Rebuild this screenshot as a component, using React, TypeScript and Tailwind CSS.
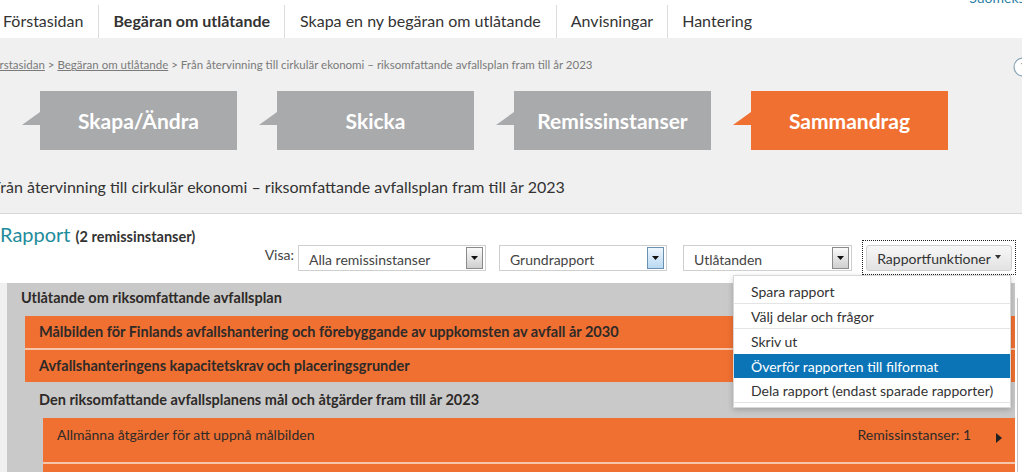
import React from "react";

const font = { fontFamily: "Lato, 'Noto Sans', sans-serif" };

function Tab({ label, active }: { label: string; active?: boolean }) {
  const color = active ? "#f07032" : "#a9aaac";
  return (
    <div className="flex items-start">
      <svg width="18" height="34" viewBox="0 0 18 34" className="shrink-0">
        <polygon points="18,21 0,34 18,34" fill={color} />
      </svg>
      <div
        className={`w-[197px] h-[59px] flex items-center justify-center text-white font-bold text-[21px] ${active ? "bg-[#f07032]" : "bg-[#a9aaac]"}`}
      >
        {label}
      </div>
    </div>
  );
}

function SelectBox({ label, width, focused }: { label: string; width: string; focused?: boolean }) {
  return (
    <div className={`${width} h-[26px] border border-[#cfcfcf] bg-white flex items-center justify-between pl-[10px] pr-[2px]`}>
      <span className="text-[14px] text-[#444] pt-[2px]">{label}</span>
      <div
        className={`w-[17px] h-[22px] border flex items-center justify-center ${focused ? "border-[#6b8fae] bg-gradient-to-b from-[#eef6fd] to-[#b9d9f3]" : "border-[#8a8a8a] bg-gradient-to-b from-[#fafafa] to-[#cfcfcf]"}`}
      >
        <svg width="7" height="4" viewBox="0 0 7 4">
          <polygon points="0,0 7,0 3.5,4" fill="#111" />
        </svg>
      </div>
    </div>
  );
}

export default function App() {
  return (
    <div className="w-[1022px] h-[472px] overflow-hidden bg-white relative" style={font}>
      <div className="absolute top-[-13px] right-[-6px] text-[14px] text-[#2a7fa6]">Suomeksi</div>
      {/* Top nav */}
      <div className="h-[38px] flex items-stretch text-[16px] text-[#333] -ml-[12px]">
        <div className="flex items-center px-[15px] pt-[4px]">Förstasidan</div>
        <div className="flex items-center px-[14px] border-l border-[#dcdcdc] mt-[5px] pb-[1px] font-bold">Begäran om utlåtande</div>
        <div className="flex items-center px-[15px] border-l border-[#dcdcdc] mt-[5px] pb-[1px]">Skapa en ny begäran om utlåtande</div>
        <div className="flex items-center px-[14px] border-l border-[#dcdcdc] mt-[5px] pb-[1px]">Anvisningar</div>
        <div className="flex items-center px-[14px] border-l border-[#dcdcdc] mt-[5px] pb-[1px]">Hantering</div>
      </div>

      {/* Gray area */}
      <div className="bg-[#f0f0f0] pt-[19px] pb-[16px] border-b border-[#d6d6d6]">
        <div className="flex items-center justify-between h-[16px]">
          <div className="text-[11.5px] text-[#7a7a7a] -ml-[13px] whitespace-nowrap">
            <span className="underline">Förstasidan</span> &gt; <span className="underline">Begäran om utlåtande</span> &gt; Från återvinning till cirkulär ekonomi – riksomfattande avfallsplan fram till år 2023
          </div>
          <svg width="20" height="20" viewBox="0 0 20 20" className="-mr-[11px] mt-[3px] shrink-0">
            <circle cx="10" cy="10" r="9" fill="white" stroke="#8aa7b8" strokeWidth="1.2" />
            <text x="10" y="14" textAnchor="middle" fontSize="12" fill="#5a8aa5">?</text>
          </svg>
        </div>
        <div className="flex gap-[22px] mt-[18px] pl-[22px]">
          <Tab label="Skapa/Ändra" />
          <Tab label="Skicka" />
          <Tab label="Remissinstanser" />
          <Tab label="Sammandrag" active />
        </div>
        <div className="mt-[27px] h-[20px] leading-[20px] text-[16px] text-[#333] -ml-[8px] whitespace-nowrap">
          Från återvinning till cirkulär ekonomi – riksomfattande avfallsplan fram till år 2023
        </div>
      </div>

      {/* White area */}
      <div className="pt-[7px]">
        <div className="h-[24px] flex items-baseline whitespace-nowrap">
          <span className="text-[20px] text-[#1d8c9c] leading-[26px]">Rapport</span>
          <span className="text-[14.5px] font-bold text-[#333] ml-[5px]">(2 remissinstanser)</span>
        </div>
        <div className="h-[26px] flex items-start justify-end pr-[10px]">
          <span className="text-[14px] text-[#444] mr-[4px] -mt-[1px]">Visa:</span>
          <SelectBox label="Alla remissinstanser" width="w-[188px]" />
          <div className="w-[13px]" />
          <SelectBox label="Grundrapport" width="w-[168px]" focused />
          <div className="w-[16px]" />
          <SelectBox label="Utlåtanden" width="w-[169px]" />
          <div className="w-[14px]" />
          <div className="relative">
            <div className="absolute -left-[4px] -top-[5px] -right-[4px] -bottom-[4px] border border-dotted border-[#222]" />
            <div className="w-[146px] h-[26px] rounded-[3px] border border-[#cfcfcf] bg-gradient-to-b from-[#f8f8f8] to-[#e2e2e2] flex items-center justify-center text-[14px] text-[#333] gap-[4px]">
              <span>Rapportfunktioner</span>
              <svg width="6" height="4" viewBox="0 0 6 4" className="mb-[3px]">
                <polygon points="0,0 6,0 3,4" fill="#333" />
              </svg>
            </div>
            {/* Dropdown menu */}
            <div className="absolute right-[1px] top-[30px] w-[278px] bg-white border border-[#d8d8d8] shadow-[0_2px_6px_rgba(0,0,0,0.2)] pt-[3px] pb-[4px] z-10 text-[14px] text-[#333]">
              <div className="h-[25px] flex items-center pl-[17px] border-b border-[#e4e4e4]">Spara rapport</div>
              <div className="h-[25px] flex items-center pl-[17px] border-b border-[#e4e4e4]">Välj delar och frågor</div>
              <div className="h-[25px] flex items-center pl-[17px]">Skriv ut</div>
              <div className="h-[24px] flex items-center pl-[17px] bg-[#0b74b6] text-white">Överför rapporten till filformat</div>
              <div className="h-[25px] flex items-center pl-[17px] border-b border-[#e4e4e4]">Dela rapport (endast sparade rapporter)</div>
            </div>
          </div>
        </div>

        {/* Report rows */}
        <div className="mt-[12px] flex">
          <div className="w-[7px] bg-[#f0f0f0] shrink-0" />
          <div className="flex-1 bg-[#c9c9c9] text-[14px] text-[#2e2a28]">
            <div className="h-[33px] pl-[14px] pt-[6px] font-bold text-[14.5px] leading-[18px]">Utlåtande om riksomfattande avfallsplan</div>
            <div className="pl-[18px]">
              <div className="h-[34px] bg-[#f07032] pl-[14px] pt-[7px] font-bold text-[14.5px] leading-[18px] border-b-2 border-[#f6c5aa]">
                Målbilden för Finlands avfallshantering och förebyggande av uppkomsten av avfall år 2030
              </div>
              <div className="h-[32px] bg-[#f07032] pl-[14px] pt-[7px] font-bold text-[14.5px] leading-[18px]">
                Avfallshanteringens kapacitetskrav och placeringsgrunder
              </div>
              <div className="bg-[#c9c9c9]">
                <div className="h-[36px] pl-[14px] pt-[9px] font-bold text-[14.5px] leading-[18px]">Den riksomfattande avfallsplanens mål och åtgärder fram till år 2023</div>
                <div className="pl-[18px]">
                  <div className="h-[46px] bg-[#f07032] border-b-2 border-[#f6c5aa] pl-[14px] pr-[13px] pt-[8px] flex items-start justify-between leading-[18px]">
                    <span>Allmänna åtgärder för att uppnå målbilden</span>
                    <span className="flex items-center">
                      <span>Remissinstanser: 1</span>
                      <svg width="6" height="10" viewBox="0 0 6 10" className="ml-[25px] mt-[6px]">
                        <polygon points="0,0 6,5 0,10" fill="#222" />
                      </svg>
                    </span>
                  </div>
                  <div className="h-[40px] bg-[#f07032]" />
                </div>
              </div>
            </div>
          </div>
          <div className="w-[7px] shrink-0 pl-[2px]">
            <div className="mt-[15px] h-[200px] border-l border-[#c4c4c4]" />
          </div>
        </div>
      </div>
    </div>
  );
}
